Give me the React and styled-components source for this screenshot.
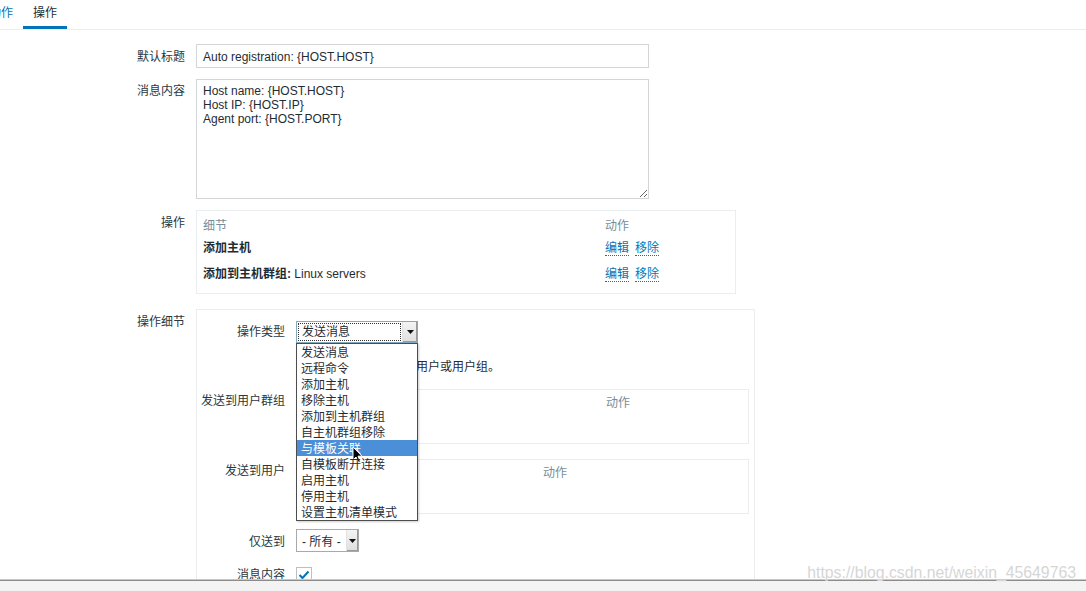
import React from "react";
import styled, { createGlobalStyle } from "styled-components";

const GlobalStyle = createGlobalStyle`
  html, body { margin: 0; padding: 0; background: #fff; }
  body {
    font-family: "Liberation Sans", "Noto Sans CJK SC", Arial, sans-serif;
    font-size: 12px;
    color: #1f2c33;
  }
  * { box-sizing: border-box; }
`;

const Page = styled.div`
  position: relative;
  width: 1086px;
  height: 591px;
  overflow: hidden;
  background: #fff;
`;

const TabBar = styled.div`
  display: flex;
  border-bottom: 1px solid #ebeef0;
  margin-left: -21px;
`;

const Tab = styled.div`
  padding: 5px 10px 5px;
  line-height: 16px;
  border-bottom: 3px solid ${(p) => (p.$active ? "#0275b8" : "transparent")};
  color: ${(p) => (p.$active ? "#1f2c33" : "#0275b8")};
`;

const Form = styled.div`
  display: grid;
  grid-template-columns: 185px auto;
  column-gap: 11px;
  row-gap: 11px;
  padding-top: 14px;
  align-items: start;
`;

const Label = styled.div`
  text-align: right;
  line-height: 14px;
  padding-top: ${(p) => p.$pt ?? 6}px;
  margin-top: ${(p) => p.$mt ?? 0}px;
  white-space: nowrap;
  color: #2b373d;
`;

const TextInput = styled.div`
  width: 453px;
  height: 24px;
  border: 1px solid #d2d6d9;
  padding: 1px 6px 0;
  line-height: 22px;
  background: #fff;
`;

const TextArea = styled.textarea`
  display: block;
  width: 453px;
  height: 120px;
  border: 1px solid #d2d6d9;
  padding: 4px 6px 2px;
  margin: 0;
  font-family: "Liberation Sans", "Noto Sans CJK SC", Arial, sans-serif;
  font-size: 12px;
  line-height: 14px;
  color: #1f2c33;
  resize: both;
  outline: none;
`;

const Box = styled.div`
  width: ${(p) => p.$w}px;
  border: 1px solid #ebeef0;
  margin-top: ${(p) => p.$mt ?? 0}px;
`;

const OpsTable = styled.div`
  padding: 5px 6px 9px;
  display: grid;
  grid-template-columns: 402px auto;
`;

const Cell = styled.div`
  line-height: 16px;
  padding: ${(p) => (p.$head ? "2px 0 4px" : p.$last ? "2px 0 2px" : "2px 0 8px")};
  color: ${(p) => (p.$head ? "#768d99" : "#1f2c33")};
  font-weight: ${(p) => (p.$bold ? "bold" : "normal")};
  white-space: nowrap;
`;

const Bold = styled.span`
  font-weight: bold;
`;

const Link = styled.span`
  color: #0275b8;
  border-bottom: 1px dotted #0275b8;
  margin-right: 6px;
`;

const DetailGrid = styled.div`
  display: grid;
  grid-template-columns: 88px auto;
  column-gap: 11px;
  row-gap: 15px;
  padding-top: 11px;
  padding-bottom: 40px;
  align-items: start;
`;

const SelectWrap = styled.div`
  position: relative;
  width: ${(p) => p.$w}px;
  height: ${(p) => p.$h}px;
  z-index: ${(p) => (p.$open ? 10 : 1)};
`;

const SelectFace = styled.div`
  display: flex;
  align-items: stretch;
  width: 100%;
  height: 100%;
  border: 1px solid ${(p) => (p.$focus ? "#86a9bd" : "#a9a9a9")};
  background: #fff;
`;

const SelectText = styled.div`
  flex: 1;
  margin: 1px;
  padding: 1px 3px 0;
  line-height: ${(p) => p.$lh}px;
  border: 1px dotted ${(p) => (p.$focus ? "#333" : "transparent")};
  white-space: nowrap;
  color: #1f2c33;
`;

const SelectButton = styled.div`
  width: 15px;
  display: flex;
  align-items: center;
  justify-content: center;
  background: linear-gradient(#f4f4f4, #dedede);
  border-left: 1px solid #e2e2e2;
  box-shadow: inset -1px -1px 0 #9a9a9a;
`;

const Arrow = () => (
  <svg width="7" height="4" viewBox="0 0 7 4">
    <path d="M0 0 H7 L3.5 4 Z" fill="#111" />
  </svg>
);

const DropList = styled.div`
  position: absolute;
  top: 100%;
  left: 0;
  width: 122px;
  border: 1px solid #4d4d4d;
  background: #fff;
  box-shadow: 1px 1px 2px rgba(0, 0, 0, 0.2);
`;

const DropItem = styled.div`
  position: relative;
  line-height: 18px;
  height: 16px;
  padding: 0 4px;
  white-space: nowrap;
  background: ${(p) => (p.$sel ? "#4a8fd8" : "transparent")};
  color: ${(p) => (p.$sel ? "#fff" : "#1f2c33")};
`;

const Cursor = styled.svg`
  position: absolute;
  left: 55px;
  top: 6px;
`;

const Hint = styled.div`
  height: 16px;
  line-height: 18px;
  white-space: nowrap;
`;

const SubTable = styled.div`
  width: 453px;
  border: 1px solid #ebeef0;
  padding: 5px 6px 10px;
  display: grid;
  grid-template-columns: ${(p) => p.$col}px auto;
  row-gap: 6px;
`;

const HeadCell = styled.div`
  line-height: 16px;
  color: #768d99;
`;

const PlainCell = styled.div`
  line-height: 16px;
`;

const CheckBox = styled.div`
  width: 16px;
  height: 16px;
  border: 1px solid #b9c1c6;
  background: #fff;
  display: flex;
  align-items: center;
  justify-content: center;
`;

const BottomBar = styled.div`
  position: absolute;
  left: 0;
  right: 0;
  bottom: 0;
  height: 11px;
  background: #f3f3f3;
  border-top: 1px solid #8c8c8c;
  box-shadow: 0 -1px 0 #c8c8c8;
`;

const Watermark = styled.div`
  position: absolute;
  right: 10px;
  bottom: 10px;
  font-family: "Liberation Sans", Arial, sans-serif;
  font-size: 15.8px;
  line-height: 16px;
  color: #d6d6d6;
  text-shadow: 0 0 1px #fff;
`;

const options = [
  "发送消息",
  "远程命令",
  "添加主机",
  "移除主机",
  "添加到主机群组",
  "自主机群组移除",
  "与模板关联",
  "自模板断开连接",
  "启用主机",
  "停用主机",
  "设置主机清单模式",
];

export default function App() {
  return (
    <Page>
      <GlobalStyle />
      <TabBar>
        <Tab>动作</Tab>
        <Tab $active>操作</Tab>
      </TabBar>

      <Form>
        <Label>默认标题</Label>
        <TextInput>Auto registration: {"{HOST.HOST}"}</TextInput>

        <Label $pt={5}>消息内容</Label>
        <TextArea
          readOnly
          defaultValue={"Host name: {HOST.HOST}\nHost IP: {HOST.IP}\nAgent port: {HOST.PORT}"}
        />

        <Label>操作</Label>
        <Box $w={540}>
          <OpsTable>
            <Cell $head>细节</Cell>
            <Cell $head>动作</Cell>
            <Cell $bold>添加主机</Cell>
            <Cell>
              <Link>编辑</Link>
              <Link>移除</Link>
            </Cell>
            <Cell $last>
              <Bold>添加到主机群组:</Bold> Linux servers
            </Cell>
            <Cell $last>
              <Link>编辑</Link>
              <Link>移除</Link>
            </Cell>
          </OpsTable>
        </Box>

        <Label $mt={4}>操作细节</Label>
        <Box $w={559} $mt={4}>
          <DetailGrid>
            <Label $pt={4}>操作类型</Label>
            <SelectWrap $w={122} $h={22} $open>
              <SelectFace $focus>
                <SelectText $focus $lh={15}>发送消息</SelectText>
                <SelectButton>
                  <Arrow />
                </SelectButton>
              </SelectFace>
              <DropList>
                {options.map((o) => (
                  <DropItem key={o} $sel={o === "与模板关联"}>
                    {o}
                    {o === "与模板关联" && (
                      <Cursor width="12" height="18" viewBox="0 0 12 18">
                        <path
                          d="M1 1 L1 14 L4 11 L6.5 16.5 L8.5 15.6 L6 10.2 L10 10.2 Z"
                          fill="#000"
                          stroke="#fff"
                          strokeWidth="1"
                          strokeLinejoin="round"
                        />
                      </Cursor>
                    )}
                  </DropItem>
                ))}
              </DropList>
            </SelectWrap>

            <div />
            <Hint>请至少选择一个或多个用户或用户组。</Hint>

            <Label $pt={5}>发送到用户群组</Label>
            <SubTable $col={303}>
              <HeadCell>用户群组</HeadCell>
              <HeadCell>动作</HeadCell>
              <PlainCell>
                <Link>添加</Link>
              </PlainCell>
              <PlainCell />
            </SubTable>

            <Label $pt={5}>发送到用户</Label>
            <SubTable $col={240}>
              <HeadCell>用户</HeadCell>
              <HeadCell>动作</HeadCell>
              <PlainCell>
                <Link>添加</Link>
              </PlainCell>
              <PlainCell />
            </SubTable>

            <Label $pt={6}>仅送到</Label>
            <SelectWrap $w={63} $h={23}>
              <SelectFace>
                <SelectText $lh={18}>- 所有 -</SelectText>
                <SelectButton>
                  <Arrow />
                </SelectButton>
              </SelectFace>
            </SelectWrap>

            <Label $pt={1}>消息内容</Label>
            <CheckBox>
              <svg width="12" height="10" viewBox="0 0 12 10">
                <path d="M1.5 5 L4.5 8 L10.5 1.5" fill="none" stroke="#0275b8" strokeWidth="2" />
              </svg>
            </CheckBox>
          </DetailGrid>
        </Box>
      </Form>

      <BottomBar />
      <Watermark>https://blog.csdn.net/weixin_45649763</Watermark>
    </Page>
  );
}
